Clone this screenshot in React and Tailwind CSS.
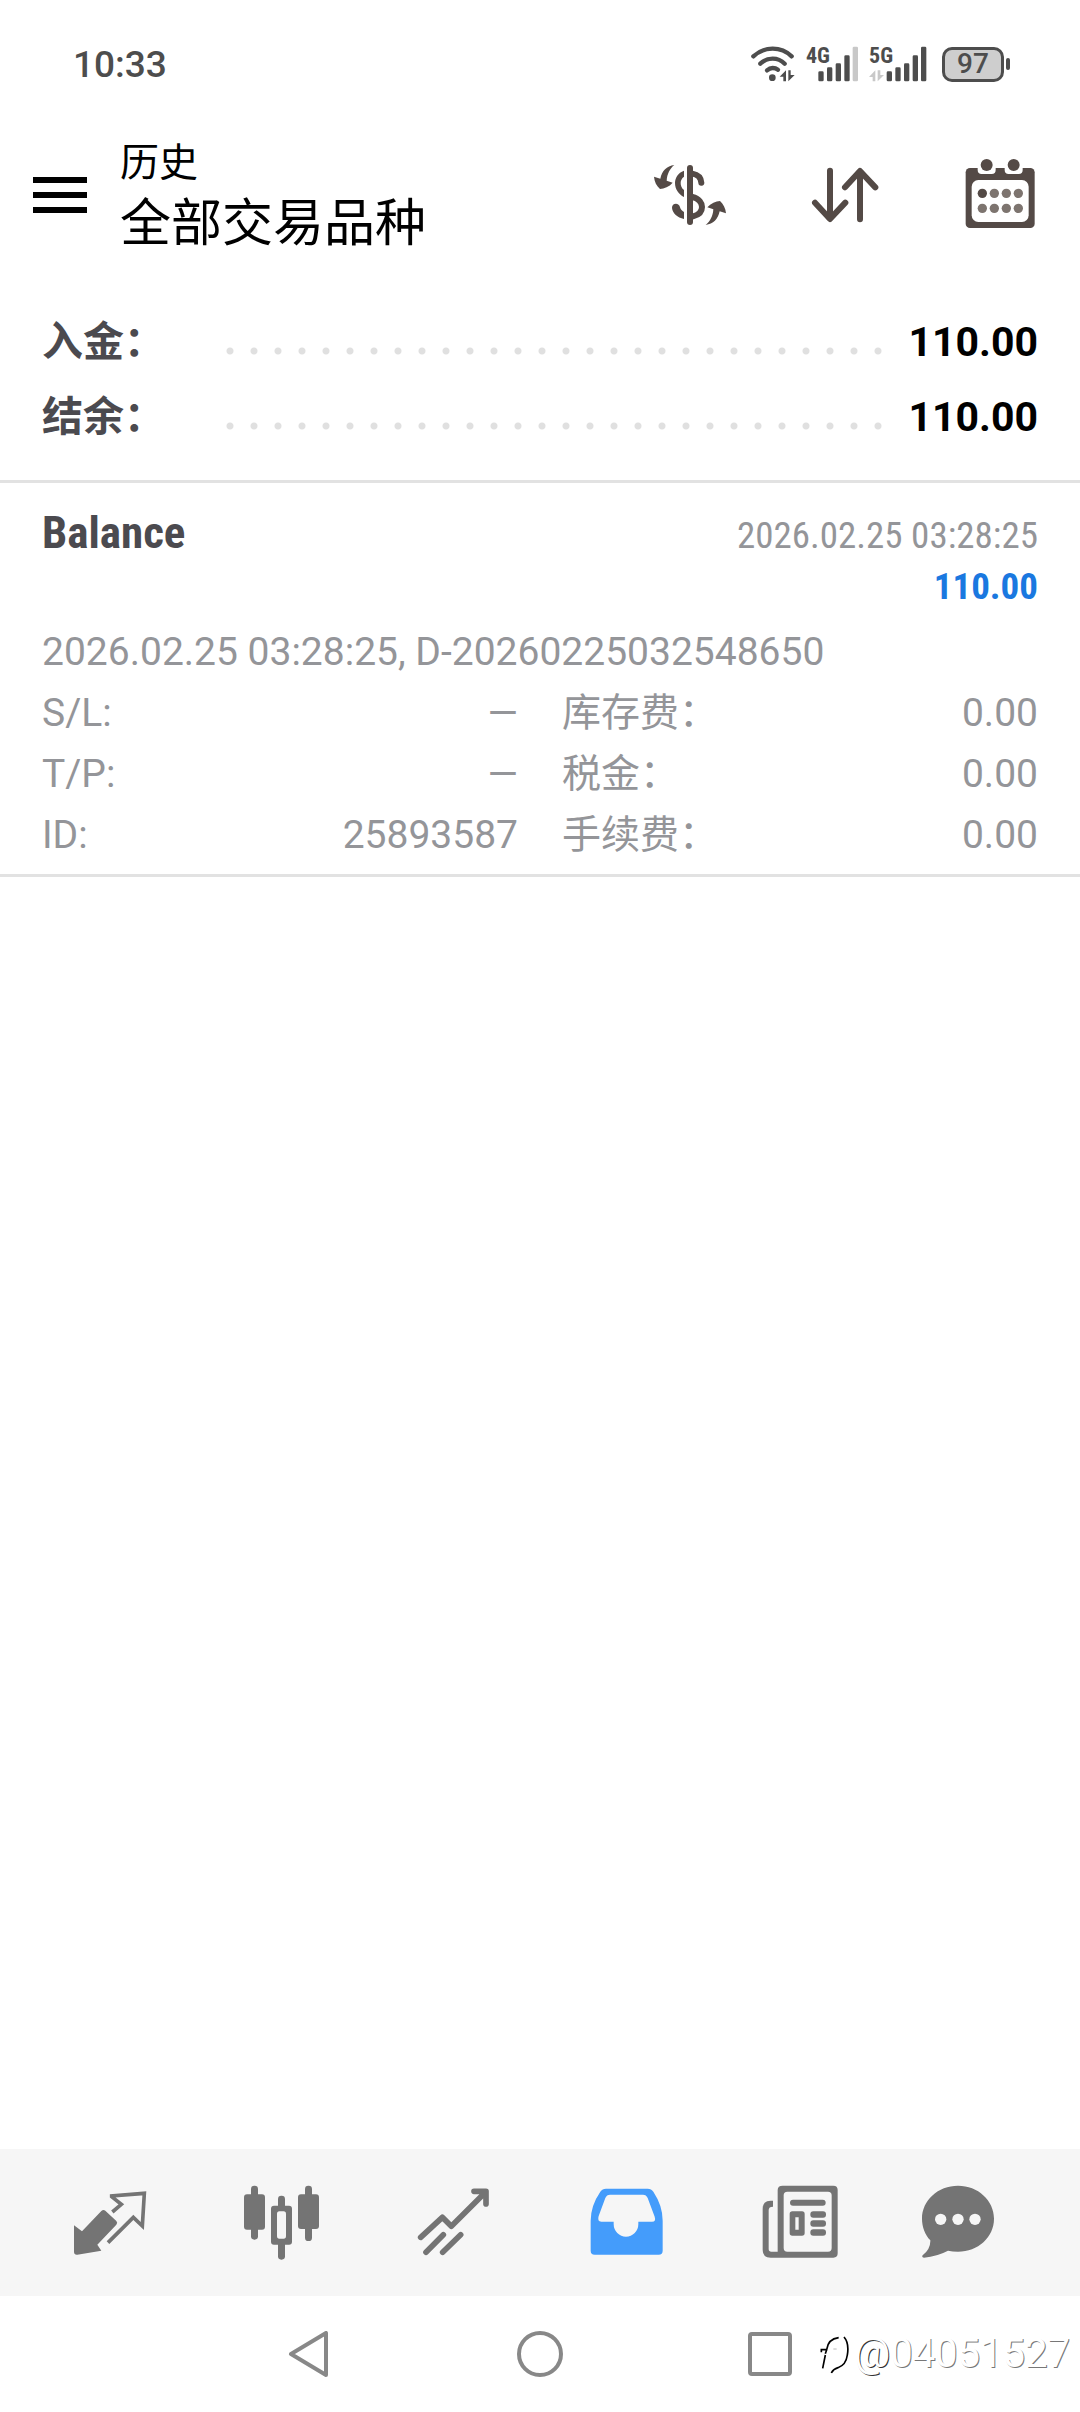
import React, { useState } from "react";

const summary = [
  { label: "入金：", value: "110.00" },
  { label: "结余：", value: "110.00" },
];

const deal = {
  type: "Balance",
  time: "2026.02.25 03:28:25",
  profit: "110.00",
  comment: "2026.02.25 03:28:25, D-20260225032548650",
  left: [
    { label: "S/L:", value: "—" },
    { label: "T/P:", value: "—" },
    { label: "ID:", value: "25893587" },
  ],
  right: [
    { label: "库存费：", value: "0.00" },
    { label: "税金：", value: "0.00" },
    { label: "手续费：", value: "0.00" },
  ],
};

const narrow = "font-['Roboto_Condensed','Liberation_Sans_Narrow',sans-serif]";

const WifiIcon = () => (
  <svg className="w-[44px] h-[36px]" viewBox="98 74 132 108" fill="none">
    <g stroke="#4d4d4d" strokeWidth="13" strokeLinecap="round">
      <path d="M105 105Q130 82 163 82T220 105" />
      <path d="M126 127Q142 112 163 112T199 127" />
      <path d="M146 147Q154 140 163 140T179 145" />
    </g>
    <circle cx="162" cy="169" r="10" fill="#4d4d4d" />
    <path d="M184 166L203 147V180H195V166ZM210 147H217V161H229L210 180Z" fill="#4d4d4d" />
  </svg>
);

const SignalIcon = ({ label, weak, arrows }) => (
  <svg
    className={arrows ? "w-[58px] h-[48px]" : "w-[52px] h-[48px]"}
    viewBox={arrows ? "-20 56 174 144" : "-4 56 156 144"}
  >
    {arrows && (
      <path d="M-20 167L-1 147V180H-9V167ZM6 147H14V161H25L6 180Z" fill="#c8c8c8" />
    )}
    <g fill="#4d4d4d">
      <rect x="33" y="150" width="16" height="30" rx="4" />
      <rect x="59" y="138" width="16" height="42" rx="4" />
      <rect x="85" y="126" width="16" height="54" rx="4" />
      <rect x="111" y="102" width="16" height="78" rx="4" />
    </g>
    <rect x="136" y="76" width="16" height="104" rx="4" fill={weak ? "#c8c8c8" : "#4d4d4d"} />
    <text
      x={arrows ? "-20" : "-4"}
      y="125"
      fontSize="66"
      fontWeight="700"
      fill="#4d4d4d"
      fontFamily="Roboto Condensed, Liberation Sans Narrow, sans-serif"
    >
      {label}
    </text>
  </svg>
);

const StatusBar = () => (
  <div className="flex h-32 items-center justify-between pl-[73px] pr-[70px] text-[#4d4d4d]">
    <span className="text-[37px] font-medium leading-none">10:33</span>
    <div className="flex items-center gap-[11px]">
      <WifiIcon />
      <SignalIcon label="4G" weak />
      <SignalIcon label="5G" arrows />
      <div className="ml-1 flex items-center gap-[2px]">
        <div className="flex h-[35px] w-[62px] items-center justify-center rounded-[10px] border-[3px] border-[#4d4d4d] bg-[#cecece] text-[28px] font-medium leading-none">
          97
        </div>
        <div className="h-3 w-1 rounded-full bg-[#4d4d4d]" />
      </div>
    </div>
  </div>
);

const CurrencyIcon = () => (
  <svg className="size-[72px]" viewBox="102 87 216 216" fill="#544a46">
    <rect x="201" y="105" width="18" height="180" rx="9" />
    <path d="M192 122C174 128 165 144 165 158C165 178 176 192 192 201V180C184 174 182 166 182 159C182 152 185 145 192 140Z" />
    <path d="M156 234C155 218 178 217 180 232C182 238 186 243 192 246V267C172 263 158 250 156 234Z" />
    <path
      d="M217 131C234 134 243 144 244 158M217 201C238 206 246 220 246 231C246 246 236 255 219 259"
      fill="none"
      stroke="#544a46"
      strokeWidth="18"
      strokeLinecap="round"
    />
    <path
      id="swap"
      d="M163 105C140 108 126 122 121 146L102 140C103 155 110 168 120 177C132 176 148 170 158 158L140 152C141 132 150 115 163 105Z"
    />
    <use href="#swap" transform="rotate(180 210 195)" />
  </svg>
);

const SortIcon = () => (
  <svg
    className="size-[72px]"
    viewBox="570 87 216 216"
    fill="none"
    stroke="#544a46"
    strokeWidth="18"
    strokeLinecap="round"
    strokeLinejoin="round"
  >
    <path d="M633 122V266M588 218L633 267L679 218" />
    <path d="M723 268V124M678 172L723 123L769 172" />
  </svg>
);

const CalendarIcon = () => (
  <svg className="size-[72px]" viewBox="1033 87 216 216">
    <rect x="1038" y="114" width="207" height="180" rx="13" fill="#544a46" />
    <rect x="1056" y="150" width="171" height="126" rx="20" fill="#fff" />
    <path
      d="M1074 108V120Q1074 132 1086 132H1116Q1128 132 1128 120V108ZM1155 108V120Q1155 132 1167 132H1197Q1209 132 1209 120V108Z"
      fill="#fff"
    />
    <circle cx="1101" cy="105" r="18" fill="#544a46" />
    <circle cx="1182" cy="105" r="18" fill="#544a46" />
    {[190, 235].map((cy) =>
      [1088, 1124, 1160, 1196].map((cx) => (
        <circle
          key={`${cx}-${cy}`}
          cx={cx}
          cy={cy}
          r="14"
          fill={cx === 1088 && cy === 190 ? "#544a46" : "#7d746f"}
        />
      ))
    )}
  </svg>
);

const Header = () => (
  <header className="flex items-center pt-1 pl-[33px] pr-[44px]">
    <button type="button" aria-label="菜单" className="flex w-[54px] flex-col gap-[9px]">
      <span className="h-1.5 bg-black" />
      <span className="h-1.5 bg-black" />
      <span className="h-1.5 bg-black" />
    </button>
    <div className="ml-[33px] flex-1 pt-1 text-black">
      <p className="text-[39px] leading-[54px]">历史</p>
      <h1 className="text-[51px] leading-[68px]">全部交易品种</h1>
    </div>
    <div className="flex gap-[83px]">
      <button type="button" aria-label="货币">
        <CurrencyIcon />
      </button>
      <button type="button" aria-label="排序">
        <SortIcon />
      </button>
      <button type="button" aria-label="日期">
        <CalendarIcon />
      </button>
    </div>
  </header>
);

const Summary = () => (
  <dl className="border-b-[3px] border-[#e2e2e2] px-[42px] pt-[47px] pb-[25px] font-bold">
    {summary.map((row) => (
      <div key={row.label} className="flex h-[75px] items-center text-[41px] leading-[75px]">
        <dt className="w-[176px] text-[#4b4a4f]">{row.label}</dt>
        <dd className="flex flex-1 items-center text-black">
          <span className="mr-3 mt-4 h-2 flex-1 bg-[radial-gradient(circle,#e0e0e0_3px,transparent_4px)] bg-[length:24px_8px] bg-repeat-x" />
          {row.value}
        </dd>
      </div>
    ))}
  </dl>
);

const DetailColumn = ({ rows }) => (
  <dl>
    {rows.map((row) => (
      <div key={row.label} className="flex justify-between">
        <dt>{row.label}</dt>
        <dd>{row.value}</dd>
      </div>
    ))}
  </dl>
);

const DealItem = () => (
  <article className="border-b-[3px] border-[#e2e2e2] px-[42px] pt-6 pb-2 text-[#949599]">
    <div className={`${narrow} text-[37px] leading-[51px]`}>
      <div className="flex items-baseline justify-between">
        <h2 className="text-[45px] font-bold leading-[51px] text-[#4b4a4f]">{deal.type}</h2>
        <time>{deal.time}</time>
      </div>
      <p className="text-right font-bold text-[#1a78e0]">{deal.profit}</p>
    </div>
    <div className="mt-2.5 text-[39px] leading-[61px]">
      <p>{deal.comment}</p>
      <div className="grid grid-cols-2 gap-[44px]">
        <DetailColumn rows={deal.left} />
        <DetailColumn rows={deal.right} />
      </div>
    </div>
  </article>
);

// Bottom tab icons, all drawn on a 288 unit square
const tabs = [
  {
    name: "行情",
    box: "66 103 288 288",
    icon: (
      <>
        <path d="M102 254L126 272L184 211Q190 205 196 210L229 241Q234 246 229 252L172 312L184 330L112 342Q102 343 102 333Z" />
        <path
          d="M217 214L244 191L215 168V166L313 158L307 256L280 230L204 306"
          fill="none"
          stroke="currentColor"
          strokeWidth="11"
        />
      </>
    ),
  },
  {
    name: "图表",
    box: "582 103 288 288",
    icon: (
      <>
        <rect x="633" y="135" width="21" height="162" rx="10" />
        <rect x="612" y="161" width="63" height="106" rx="9" />
        <rect x="795" y="135" width="21" height="166" rx="10" />
        <rect x="774" y="161" width="63" height="104" rx="9" />
        <rect x="714" y="165" width="21" height="40" rx="10" />
        <rect x="714" y="300" width="21" height="57" rx="10" />
        <path
          fillRule="evenodd"
          d="M702 195H747Q756 195 756 204V303Q756 312 747 312H702Q693 312 693 303V204Q693 195 702 195ZM718 212Q711 212 711 220V286Q711 294 718 294H731Q738 294 738 286V220Q738 212 731 212Z"
        />
      </>
    ),
  },
  {
    name: "交易",
    box: "1098 103 288 288",
    icon: (
      <g fill="none" stroke="currentColor" strokeWidth="17" strokeLinecap="round" strokeLinejoin="round">
        <path d="M1142 290L1207 230L1234 257L1337 154M1302 152H1338V190" />
        <path d="M1158 335L1210 282M1208 335L1262 282" />
      </g>
    ),
  },
  {
    name: "历史",
    box: "54 103 288 288",
    icon: (
      <path
        fillRule="evenodd"
        d="M138 144H263Q274 144 280 153Q308 195 308 240V330Q308 342 296 342H104Q92 342 92 330V240Q92 195 121 153Q127 144 138 144ZM150 162Q140 162 136 172L116 226Q111 243 124 243H161V250A37 38 0 0 0 235 250V243H276Q289 243 284 228L263 172Q259 162 249 162Z"
      />
    ),
  },
  {
    name: "新闻",
    box: "570 103 288 288",
    icon: (
      <>
        <path
          fillRule="evenodd"
          d="M668 135H820Q833 135 833 148V338Q833 351 820 351H632Q608 351 608 327V204Q608 180 632 180H639V198Q626 198 626 208V325Q626 333 634 333H653V148Q653 135 668 135ZM682 153Q671 153 671 164V322Q671 333 682 333H804Q815 333 815 322V164Q815 153 804 153Z"
        />
        <rect x="690" y="177" width="107" height="18" rx="9" />
        <path
          fillRule="evenodd"
          d="M697 212H726Q734 212 734 220V277Q734 285 726 285H697Q689 285 689 277V220Q689 212 697 212ZM706 230V267H716V230Z"
        />
        <rect x="751" y="212" width="47" height="19" rx="9" />
        <rect x="751" y="239" width="47" height="19" rx="9" />
        <rect x="751" y="266" width="47" height="19" rx="9" />
      </>
    ),
  },
  {
    name: "消息",
    box: "1086 103 288 288",
    icon: (
      <>
        <path d="M1194 135C1254 135 1302 179 1302 234S1254 333 1194 333Q1178 333 1164 330Q1132 347 1092 351Q1084 350 1088 344Q1112 325 1111 299C1095 282 1086 259 1086 234C1086 179 1134 135 1194 135Z" />
        <g fill="#f6f6f6">
          <circle cx="1142" cy="236" r="17" />
          <circle cx="1194" cy="236" r="17" />
          <circle cx="1245" cy="236" r="17" />
        </g>
      </>
    ),
  },
];

const TabBar = ({ current, onSelect }) => (
  <nav className="flex h-[147px] items-center bg-[#f6f6f6] px-6">
    {tabs.map((tab, i) => (
      <button
        key={tab.name}
        type="button"
        aria-label={tab.name}
        onClick={() => onSelect(i)}
        className={`flex flex-1 justify-center ${current === i ? "text-[#449cfb]" : "text-[#747474]"}`}
      >
        <svg className="size-24" viewBox={tab.box} fill="currentColor">
          {tab.icon}
        </svg>
      </button>
    ))}
  </nav>
);

const SystemNav = () => (
  <div className="relative flex h-[116px] items-center justify-center gap-[184px]">
    <button type="button" aria-label="返回">
      <svg className="size-[46px]" viewBox="0 0 46 46" fill="none" stroke="#888" strokeWidth="4" strokeLinejoin="round">
        <path d="M39 2V44L4 23Z" />
      </svg>
    </button>
    <button type="button" aria-label="主页">
      <svg className="size-[46px]" viewBox="0 0 46 46" fill="none" stroke="#888" strokeWidth="4">
        <circle cx="23" cy="23" r="21" />
      </svg>
    </button>
    <button type="button" aria-label="最近任务">
      <svg className="size-[46px]" viewBox="0 0 46 46" fill="none" stroke="#888" strokeWidth="4">
        <rect x="3" y="3" width="40" height="40" rx="2" />
      </svg>
    </button>
    <div className="absolute right-2.5 top-[34px] flex items-center gap-1 text-[40px] leading-[48px] text-white">
      <svg className="h-[42px] w-[32px]" viewBox="0 0 96 126" fill="none" stroke="#000" strokeWidth="5">
        <path d="M10 58V50H26Q30 18 62 14M22 66L14 106M26 50L22 62" />
        <path d="M78 12Q94 30 88 66Q84 96 60 104Q46 108 40 120" />
        <path d="M46 48H56" stroke="#999" strokeWidth="2" />
      </svg>
      <span className="[text-shadow:1px_1px_0_#333]">
        @<span className="[text-shadow:1px_1px_0_#777]">04051527</span>
      </span>
    </div>
  </div>
);

const App = () => {
  const [current, setCurrent] = useState(3);

  return (
    <div className="flex min-h-screen flex-col bg-white font-['Roboto','Noto_Sans_CJK_SC',sans-serif]">
      <StatusBar />
      <Header />
      <main className="flex-1">
        <Summary />
        <DealItem />
      </main>
      <TabBar current={current} onSelect={setCurrent} />
      <SystemNav />
    </div>
  );
};

export default App;
